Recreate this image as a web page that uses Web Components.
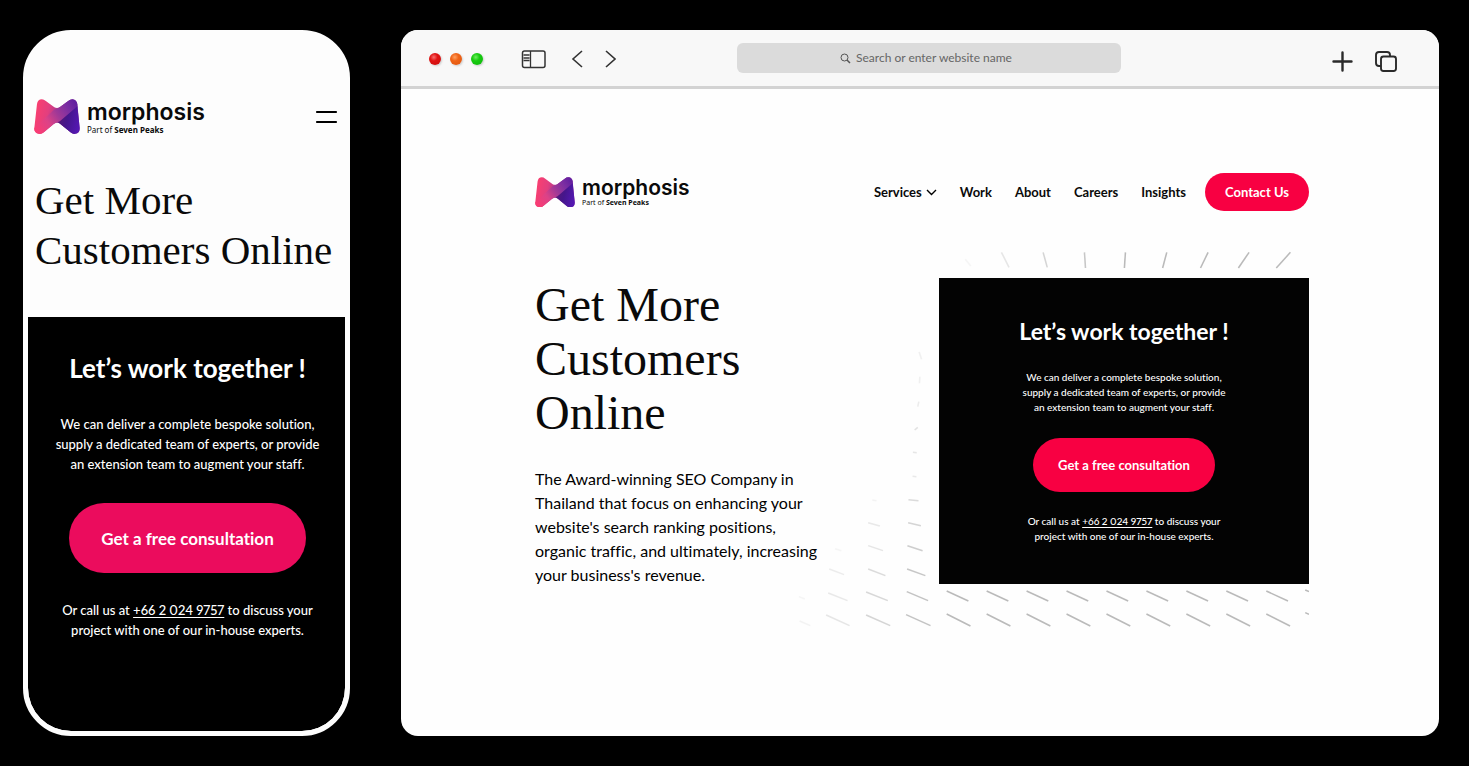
<!DOCTYPE html>
<html lang="en">
<head>
<meta charset="utf-8">
<meta name="viewport" content="width=device-width, initial-scale=1">
<title>Morphosis – Get More Customers Online</title>
<style>
  html, body { margin: 0; background: #000; }
  body { font-family: Lato, "Liberation Sans", sans-serif; font-variant-ligatures: no-common-ligatures; font-variant-numeric: proportional-nums; color: #000; }
</style>
</head>
<body>
<device-stage>
  <phone-frame>
    <mobile-header slot="top"></mobile-header>
    <page-headline slot="top" style="--size:41px;--line:50px">Get More Customers Online</page-headline>
    <consult-card class="phone"></consult-card>
  </phone-frame>
  <browser-frame>
    <site-header></site-header>
    <site-hero>
      <page-headline slot="copy" style="--size:48px;--line:54px">Get More Customers Online</page-headline>
      <p slot="copy">The Award-winning SEO Company in Thailand that focus on enhancing your website's search ranking positions, organic traffic, and ultimately, increasing your business's revenue.</p>
      <line-field slot="card"></line-field>
      <consult-card slot="card"></consult-card>
    </site-hero>
  </browser-frame>
</device-stage>

<script>
const define = (name, html, setup) => customElements.define(name, class extends HTMLElement {
  constructor() {
    super();
    const root = this.attachShadow({ mode: 'open' });
    root.innerHTML = html;
    if (setup) setup(root);
  }
});

define('device-stage', `
  <style>
    :host { display: flex; align-items: stretch; gap: 51px; min-height: 100vh; box-sizing: border-box; padding: 30px 30px 30px 23px; }
  </style><slot></slot>`);

define('phone-frame', `
  <style>
    :host { display: flex; flex-direction: column; flex: 0 0 327px; box-sizing: border-box; background: #fdfdfd; border: 5px solid #fdfdfd; border-radius: 48px; overflow: hidden; }
    .top { padding: 64px 7px 42px; }
    .body { flex: 1; display: flex; flex-direction: column; background: #000; border-radius: 0 0 43px 43px; }
  </style>
  <div class="top"><slot name="top"></slot></div>
  <div class="body"><slot></slot></div>`);

define('brand-logo', `
  <style>
    :host { display: block; }
    a { display: flex; align-items: center; gap: 7px; color: #0a0a0a; text-decoration: none; }
    svg { width: var(--mark, 40px); height: auto; display: block; }
    .words { display: flex; flex-direction: column; }
    .name { font: 600 var(--name, 21px)/var(--name-line, 22px) Inter, sans-serif; }
    .sub { font: 400 var(--sub, 7px)/var(--sub-line, 8px) "Noto Sans", sans-serif; white-space: nowrap; }
    b { font-weight: 700; }
  </style>
  <a href="#" aria-label="Morphosis home">
    <svg viewBox="0 0 140 108" aria-hidden="true">
      <defs>
        <linearGradient id="w" gradientUnits="userSpaceOnUse" x1="5" y1="20" x2="95" y2="40"><stop offset="0" stop-color="#fb3f6f"/><stop offset=".45" stop-color="#e23f7f"/><stop offset=".8" stop-color="#a43690"/><stop offset="1" stop-color="#8c3098"/></linearGradient>
        <linearGradient id="b" gradientUnits="userSpaceOnUse" x1="10" y1="96" x2="130" y2="20"><stop offset="0" stop-color="#f83c74"/><stop offset=".3" stop-color="#dc4287"/><stop offset=".55" stop-color="#a23996"/><stop offset=".8" stop-color="#7c2ea2"/><stop offset="1" stop-color="#6420a0"/></linearGradient>
        <linearGradient id="d" gradientUnits="userSpaceOnUse" x1="76" y1="60" x2="138" y2="75"><stop offset="0" stop-color="#521878"/><stop offset=".4" stop-color="#45168c"/><stop offset="1" stop-color="#5418b2"/></linearGradient>
      </defs>
      <path fill="url(#w)" d="M9 16Q11 1 24 1Q30 1 36 6L62 25Q70 30 78 25L104 6Q110 1 117 1Q130 2 132 16L139 88Q140 104 125 106Q118 107 112 102L80 76Q70 69 60 76L30 101Q22 108 14 106Q-1 102 1 88Z"/>
      <path fill="url(#b)" d="M1 88L62 32Q72 29 78 25L104 6Q110 1 117 1Q130 2 132 16L132 26L80 68Q70 70 60 76L30 101Q22 108 14 106Q0 102 1 88Z"/>
      <path fill="url(#d)" d="M132 22L139 88Q140 104 125 106Q118 107 112 102L80 76Q76 72 71 71Q78 69 84 63Z"/>
    </svg>
    <span class="words"><span class="name">morphosis</span><span class="sub">Part of <b>Seven Peaks</b></span></span>
  </a>`);

define('mobile-header', `
  <style>
    :host { display: flex; align-items: center; justify-content: space-between; margin-bottom: 40px; margin-left: -1px; }
    brand-logo { --mark: 46px; --name: 23px; --name-line: 26px; --sub: 8px; --sub-line: 10px; }
    button { border: 0; background: none; padding: 0; display: block; }
    svg { display: block; }
  </style>
  <brand-logo></brand-logo>
  <button aria-label="Open menu"><svg width="23" height="14" viewBox="0 0 23 14" stroke="#000" stroke-width="2.200" stroke-linecap="round"><path d="M2 2h19M2 12h19"/></svg></button>`);

define('page-headline', `
  <style>
    :host { display: block; }
    h1 { margin: 0; font: 400 var(--size)/var(--line) "Liberation Serif", serif; color: #0a0a0a; }
  </style><h1><slot></slot></h1>`);

define('consult-card', `
  <style>
    :host { display: block; background: #030303; color: #fff; text-align: center; padding: 38px 24px 40px; position: relative; box-sizing: border-box;
      --title: 23px; --title-line: 30px; --text: 10px; --text-line: 15px; --cta: 13px; --cta-w: 182px; --cta-h: 54px; --gap-a: 24px; --gap-b: 23px; --gap-c: 22px; --measure: 212px; --accent: #f80042; }
    :host(.phone) { background: none; padding: 35px 7px 35px 9px; --title: 26px; --title-line: 32px; --text: 13px; --text-line: 20px; --cta: 17px; --cta-w: 237px; --cta-h: 70px; --gap-a: 30px; --gap-b: 29px; --gap-c: 27px; --measure: 280px; --accent: #eb0c5d; }
    h2 { margin: 0 0 var(--gap-a); font-size: var(--title); line-height: var(--title-line); font-weight: 700; }
    p { margin: 0 auto; max-width: var(--measure); font-size: var(--text); line-height: var(--text-line); font-weight: 500; }
    button { display: block; margin: var(--gap-b) auto var(--gap-c); width: var(--cta-w); height: var(--cta-h); padding: 0; border: 0; border-radius: 35px; background: var(--accent); color: #fff; font-family: inherit; font-weight: 700; font-size: var(--cta); line-height: 1; font-variant-ligatures: inherit; }
    a { color: inherit; text-underline-offset: 2px; }
  </style>
  <h2>Let’s work together !</h2>
  <p>We can deliver a complete bespoke solution, supply a dedicated team of experts, or provide an extension team to augment your staff.</p>
  <button>Get a free consultation</button>
  <p>Or call us at <a href="tel:+6620249757">+66 2 024 9757</a> to discuss your<br>project with one of our in-house experts.</p>`);

define('browser-frame', `
  <style>
    :host { display: flex; flex-direction: column; flex: 1; min-width: 0; background: #fefefe; border-radius: 17px; overflow: hidden; }
    .page { padding: 0 130px 0 134px; }
  </style>
  <browser-bar></browser-bar>
  <div class="page"><slot></slot></div>`);

define('browser-bar', `
  <style>
    :host { display: grid; grid-template-columns: 308fr 384fr 276fr; align-items: center; height: 56px; padding: 0 42px 0 28px; background: #f8f8f8; border-bottom: 3px solid #d3d3d3; }
    div { display: flex; align-items: center; }
    svg { display: block; }
    button { border: 0; background: none; padding: 0; display: block; }
    .left { padding-top: 2px; }
    .left .lights { gap: 9px; margin-right: 38px; }
    .lights i { width: 12px; height: 12px; border-radius: 50%; box-shadow: 1px 1px 2px #ccc; }
    .nav { gap: 21px; margin-left: 25px; }
    label { display: flex; align-items: center; justify-content: center; gap: 5px; height: 30px; border-radius: 6px; background: #dbdbdb; }
    input { width: 162px; border: 0; padding: 0; background: none; font: 400 12px/16px Lato, sans-serif; outline: 0; }
    input::placeholder { color: #666; opacity: 1; }
    .right { justify-content: flex-end; gap: 22px; padding-top: 6px; }
  </style>
  <div class="left">
    <div class="lights">
      <i style="background:radial-gradient(circle at 40% 35%,#f87070,#e01414 35%,#c80c0c)"></i>
      <i style="background:radial-gradient(circle at 40% 35%,#ffa060,#f06418 35%,#dc5410)"></i>
      <i style="background:radial-gradient(circle at 40% 35%,#70ee60,#18cc10 35%,#0cb40c)"></i>
    </div>
    <button aria-label="Sidebar"><svg width="25" height="19" viewBox="0 0 25 19" fill="none" stroke="#333" stroke-width="1.500"><rect x="1.500" y="1" width="22.500" height="16.500" rx="2"/><path d="M9.500 1v17M2.500 5h6M2.500 8h6M2.500 10.500h6" stroke-width="1.300"/></svg></button>
    <div class="nav">
      <button aria-label="Back"><svg width="12" height="18" viewBox="0 0 12 18" fill="none" stroke="#333" stroke-width="1.600"><path d="M11 1L2 9l9 8"/></svg></button>
      <button aria-label="Forward"><svg width="12" height="18" viewBox="0 0 12 18" fill="none" stroke="#333" stroke-width="1.600"><path d="M2 1l9 8-9 8"/></svg></button>
    </div>
  </div>
  <label>
    <svg width="11" height="11" viewBox="0 0 11 11" fill="none" stroke="#555" aria-hidden="true"><circle cx="4.500" cy="4.500" r="3.500"/><path stroke-width="1.500" d="M7 7l3 3"/></svg>
    <input type="text" aria-label="Address" placeholder="Search or enter website name">
  </label>
  <div class="right">
    <button aria-label="New tab"><svg width="21" height="21" viewBox="0 0 21 21" stroke="#2a2a2a" stroke-width="2.400" stroke-linecap="round"><path d="M10.500 1.500v18M1.500 10.500h18"/></svg></button>
    <button aria-label="Tab overview"><svg width="22" height="21" viewBox="0 0 22 21" fill="none" stroke="#2a2a2a" stroke-width="1.900"><path d="M6 15H4q-3 0-3-3V4q0-3 3-3h8q3 0 3 3v1"/><rect x="6" y="5.500" width="15" height="14.500" rx="2.500"/></svg></button>
  </div>`);

define('site-header', `
  <style>
    :host { display: flex; align-items: center; justify-content: space-between; padding: 84px 0 67px; }
    nav { display: flex; align-items: center; gap: 23px; }
    a { color: #0a0a0a; text-decoration: none; font-weight: 700; font-size: 13px; line-height: 18px; display: flex; align-items: center; gap: 4px; white-space: nowrap; }
    .cta { width: 104px; height: 38px; margin-left: -4px; justify-content: center; border-radius: 19px; background: #f80042; color: #fff; }
  </style>
  <brand-logo></brand-logo>
  <nav>
    <a href="#">Services <svg width="11" height="7" viewBox="0 0 11 7" fill="none" stroke="#000" stroke-width="1.400"><path d="M1 1l4.500 4.500L10 1"/></svg></a>
    <a href="#">Work</a><a href="#">About</a><a href="#">Careers</a><a href="#">Insights</a>
    <a class="cta" href="#">Contact Us</a>
  </nav>`);

define('site-hero', `
  <style>
    :host { display: grid; grid-template-columns: minmax(0, 1fr) 370px; align-items: start; gap: 24px; }
    .copy { max-width: 290px; }
    ::slotted(p) { margin: 27px 0 0; font-size: 16px; line-height: 24px; position: relative; z-index: 1; }
    .card { position: relative; }
  </style>
  <div class="copy"><slot name="copy"></slot></div>
  <div class="card"><slot name="card"></slot></div>`);

define('line-field', `
  <style>
    :host { position: absolute; left: -159px; top: -48px; width: 529px; height: 410px; overflow: hidden; pointer-events: none; }
    svg { display: block; }
  </style>
  <svg width="529" height="410" viewBox="0 0 1536 1230" preserveAspectRatio="none" stroke="#bababa" stroke-width="4.500" aria-hidden="true"></svg>`, root => {
  // x1, y1, x2, y2, opacity
  const lines = [
    [538,88,554,108,.12],[643,67,665,112,.35],[764,67,776,112,.6],[884,67,887,114,.8],[1003,67,1000,114,1],
    [1123,67,1111,114,1],[1243,67,1221,114,1],[1362,67,1331,114,1],[1482,67,1441,114,1],
    [404,366,411,388,.2],[406,440,405,460,.2],[403,515,400,530,.25],[400,592,391,600,.4],[386,667,397,668,.35],[385,739,396,740,.3],
    [373,809,402,812,.5],[372,878,409,887,.6],[370,947,414,962,.7],[369,1017,422,1037,.8],
    [268,810,280,812,.15],[256,878,290,888,.3],[256,947,299,962,.35],[256,1017,306,1037,.5],
    [160,956,178,962,.12],[143,1017,186,1034,.25],
    [55,1100,72,1107,.12],[140,1089,196,1112,.3],[250,1086,313,1112,.55],[368,1085,430,1112,.85],
    [57,1173,88,1187,.15],[134,1155,202,1187,.35],[250,1155,320,1187,.6],[366,1154,437,1187,.85],
    [1525,1080,1536,1085,1],[1525,1148,1536,1153,1]
  ];
  for (let i = 0; i < 9; i++) {
    const x = 484 + i * 116;
    lines.push([x, 1083, x + 63, 1113, 1], [x, 1152, x + 69, 1188, 1]);
  }
  root.querySelector('svg').innerHTML = lines.map(([a, b, c, d, o]) =>
    `<line x1="${a}" y1="${b}" x2="${c}" y2="${d}" opacity="${o}"/>`).join('');
});
</script>
</body>
</html>
